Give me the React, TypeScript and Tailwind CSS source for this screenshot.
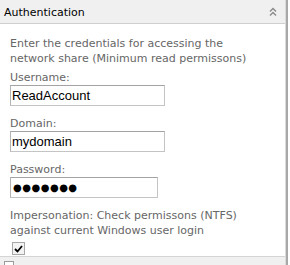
import { useState } from 'react';

const FONT = "font-['DejaVu_Sans',Verdana,sans-serif]";

function Field({ label, value, width, dots = false }: { label: string; value: string; width: string; dots?: boolean }) {
  const [val, setVal] = useState(value);
  return (
    <div className="mb-[10px]">
      <div className={`${FONT} text-[11px] leading-[15px] text-[#666666]`}>{label}</div>
      <input
        type="text"
        value={val}
        readOnly={dots}
        onChange={(e) => setVal(e.target.value)}
        className={`block ${width} h-[21px] border border-[#c4c4c4] border-t-[#a3a3a3] border-l-[#b4b4b4] bg-white text-black outline-none ${
          dots
            ? `${FONT} pl-[2px] text-[10px] tracking-[0.5px]`
            : "pl-[1px] font-['Liberation_Sans',Arial,sans-serif] text-[13px]"
        }`}
      />
    </div>
  );
}

export default function App() {
  const [checked, setChecked] = useState(true);

  return (
    <div className="flex h-[265px] w-[290px] overflow-hidden bg-white">
      <div className="flex w-[285px] flex-col">
        <div className="flex h-[24px] shrink-0 items-start justify-between border-b border-[#cfcfcf] bg-[#f0f0f0] pl-[4px] pr-[8px] pt-[5px]">
          <span className={`${FONT} text-[11px] leading-[15px] text-black`}>Authentication</span>
          <svg width="8" height="10" viewBox="0 0 8 10" className="mt-[2px]">
            <path d="M1 4.5 L4 1.5 L7 4.5" fill="none" stroke="#8a8a8a" strokeWidth="1.4" />
            <path d="M1 8.5 L4 5.5 L7 8.5" fill="none" stroke="#8a8a8a" strokeWidth="1.4" />
          </svg>
        </div>

        <div className="flex-1 px-[10px] pt-[12px]">
          <p className={`${FONT} mb-[4px] w-[245px] text-[11px] leading-[15px] text-[#666666]`}>
            Enter the credentials for accessing the network share (Minimum read permissons)
          </p>

          <Field label="Username:" value="ReadAccount" width="w-[155px]" />
          <Field label="Domain:" value="mydomain" width="w-[155px]" />
          <Field label="Password:" value="●●●●●●●" width="w-[148px]" dots />

          <p className={`${FONT} mt-[2px] w-[250px] text-[11px] leading-[15px] text-[#666666]`}>
            Impersonation: Check permissons (NTFS) against current Windows user login
          </p>
          <button
            type="button"
            onClick={() => setChecked(!checked)}
            className="ml-[2px] mt-[4px] flex h-[13px] w-[13px] items-center justify-center border border-[#a7a7a7] bg-[#f3f3f3]"
          >
            {checked && (
              <svg width="9" height="8" viewBox="0 0 9 8">
                <path d="M1 4 L3.5 6.5 L8 1" fill="none" stroke="#000" strokeWidth="1.8" />
              </svg>
            )}
          </button>
        </div>

        <div className="h-[9px] shrink-0 border-t border-[#d4d4d4] bg-[#f0f0f0] pl-[4px] pt-[4px]">
          <div className="h-[10px] w-[10px] border border-[#9a9a9a] bg-white" />
        </div>
      </div>
      <div className="w-[3px] border-l border-[#dcdcdc] bg-[#a8a8a8]" />
    </div>
  );
}
